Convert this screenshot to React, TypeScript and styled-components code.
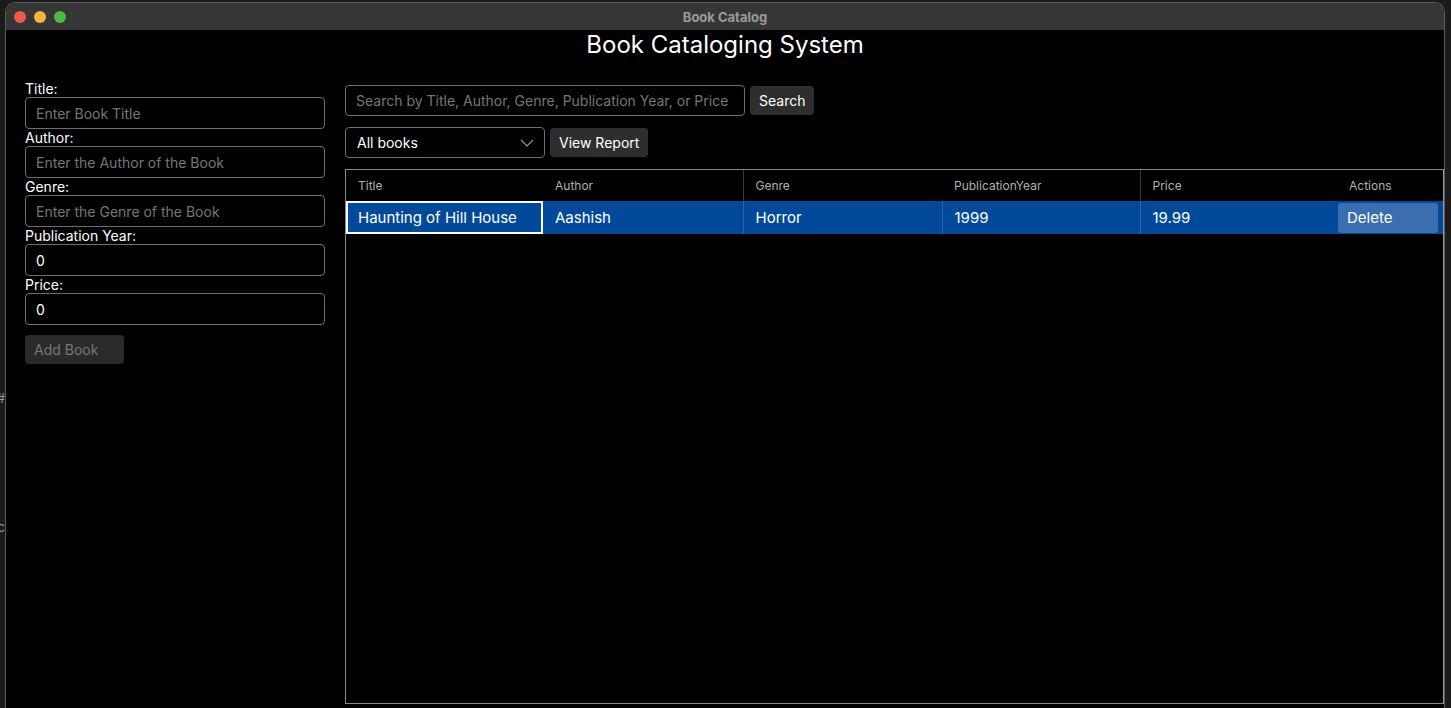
import React from "react";
import styled, { createGlobalStyle } from "styled-components";

const Global = createGlobalStyle`
  html, body { margin: 0; padding: 0; background: #1b1b1b; overflow: hidden; }
  body { font-family: Inter, "Noto Sans", "Liberation Sans", sans-serif; }
  * { box-sizing: border-box; }
`;

const Desktop = styled.div`
  display: flex;
  width: 1451px;
  height: 708px;
  overflow: hidden;
  background: #1b1b1b;
`;

const Strip = styled.div`
  width: 5px;
  flex: none;
  display: flex;
  flex-direction: column;
  overflow: hidden;
`;

const StripGlyph = styled.div<{ $top: number }>`
  margin-top: ${(p) => p.$top}px;
  height: 14px;
  display: flex;
  justify-content: flex-end;
  overflow: hidden;
  font-size: 13px;
  line-height: 14px;
  color: #9a9a9a;
  white-space: nowrap;
`;

const Window = styled.div`
  width: 1440px;
  flex: none;
  margin-top: 2px;
  border: 1px solid #5a5a5a;
  border-bottom: none;
  border-radius: 10px 10px 0 0;
  overflow: hidden;
  background: #000;
  display: flex;
  flex-direction: column;
`;

const TitleBar = styled.div`
  height: 27px;
  background: #363636;
  display: grid;
  grid-template-columns: 80px 1fr 80px;
  align-items: center;
`;

const Lights = styled.div`
  display: flex;
  gap: 8px;
  padding-left: 8px;
`;

const Light = styled.span<{ $c: string }>`
  width: 12px;
  height: 12px;
  border-radius: 50%;
  background: ${(p) => p.$c};
`;

const WindowTitle = styled.div`
  text-align: center;
  font-size: 13px;
  font-weight: 700;
  color: #9b9b9b;
`;

const Content = styled.div`
  flex: 1;
  background: #000;
  display: flex;
  flex-direction: column;
`;

const Heading = styled.h1`
  margin: 0;
  height: 30px;
  line-height: 30px;
  text-align: center;
  font-size: 24px;
  font-weight: 400;
  color: #fff;
`;

const Main = styled.div`
  display: flex;
  gap: 20px;
  padding: 20px 0 0 19px;
`;

const FormCol = styled.div`
  width: 300px;
  flex: none;
  display: flex;
  flex-direction: column;
`;

const Label = styled.label`
  height: 17px;
  line-height: 17px;
  font-size: 14px;
  color: #fff;
`;

const TextInput = styled.input`
  height: 32px;
  width: 100%;
  background: #000;
  border: 1px solid #6e6e6e;
  border-radius: 4px;
  padding: 0 10px;
  font-family: inherit;
  font-size: 14px;
  color: #fff;
  outline: none;
  &::placeholder { color: #767676; }
`;

const Button = styled.button<{ $disabled?: boolean }>`
  height: 29px;
  background: ${(p) => (p.$disabled ? "#2a2a2a" : "#2e2e2e")};
  color: ${(p) => (p.$disabled ? "#767676" : "#fff")};
  border: none;
  border-radius: 4px;
  padding: 0 9px;
  font-family: inherit;
  font-size: 14px;
  text-align: left;
`;

const AddButton = styled(Button)`
  margin-top: 10px;
  width: 99px;
`;

const RightCol = styled.div`
  flex: 1;
  display: flex;
  flex-direction: column;
  padding-top: 5px;
`;

const ToolRow = styled.div`
  display: flex;
  align-items: center;
  gap: 5px;
  margin-bottom: 11px;
`;

const SearchInput = styled(TextInput)`
  width: 400px;
  height: 31px;
`;

const Select = styled.div`
  width: 200px;
  height: 31px;
  border: 1px solid #6e6e6e;
  border-radius: 4px;
  display: flex;
  align-items: center;
  justify-content: space-between;
  padding: 0 10px 0 11px;
  font-size: 14px;
  color: #fff;
`;

const TableWrap = styled.div`
  height: 535px;
  border: 1px solid #8a8a8a;
  border-right-color: #9a9a9a;
  background: #000;
`;

const Table = styled.table`
  border-collapse: collapse;
  table-layout: fixed;
  width: 100%;
`;

const Th = styled.th<{ $line?: boolean }>`
  height: 31px;
  padding: 0 12px;
  text-align: left;
  font-weight: 400;
  font-size: 12px;
  color: #b0b0b0;
  border-left: ${(p) => (p.$line ? "1px solid #3a3a3a" : "none")};
`;

const Td = styled.td<{ $line?: boolean; $focus?: boolean }>`
  height: 33px;
  padding: 0 12px;
  background: #024a99;
  color: #fff;
  font-size: 15px;
  border-left: ${(p) => (p.$line ? "1px solid #2d63a6" : "none")};
  box-shadow: ${(p) => (p.$focus ? "inset 0 0 0 2px #fff" : "none")};
  white-space: nowrap;
`;

const ActionTd = styled.td`
  height: 33px;
  padding: 1px 5px 1px 1px;
  background: #024a99;
`;

const DeleteButton = styled.button`
  width: 100%;
  height: 30px;
  background: #3a6eae;
  border: none;
  border-radius: 3px;
  color: #fff;
  font-family: inherit;
  font-size: 15px;
  text-align: left;
  padding: 0 9px;
`;

const fields = [
  { label: "Title:", placeholder: "Enter Book Title", value: "" },
  { label: "Author:", placeholder: "Enter the Author of the Book", value: "" },
  { label: "Genre:", placeholder: "Enter the Genre of the Book", value: "" },
  { label: "Publication Year:", placeholder: "", value: "0" },
  { label: "Price:", placeholder: "", value: "0" },
];

export default function App() {
  return (
    <>
      <Global />
      <Desktop>
        <Strip>
          <StripGlyph $top={391}>#</StripGlyph>
          <StripGlyph $top={115}>ic</StripGlyph>
        </Strip>
        <Window>
          <TitleBar>
            <Lights>
              <Light $c="#ec5a52" />
              <Light $c="#f4b63c" />
              <Light $c="#4fb843" />
            </Lights>
            <WindowTitle>Book Catalog</WindowTitle>
            <div />
          </TitleBar>
          <Content>
            <Heading>Book Cataloging System</Heading>
            <Main>
              <FormCol>
                {fields.map((f) => (
                  <React.Fragment key={f.label}>
                    <Label>{f.label}</Label>
                    <TextInput placeholder={f.placeholder} defaultValue={f.value} />
                  </React.Fragment>
                ))}
                <AddButton $disabled>Add Book</AddButton>
              </FormCol>
              <RightCol>
                <ToolRow>
                  <SearchInput placeholder="Search by Title, Author, Genre, Publication Year, or Price" />
                  <Button>Search</Button>
                </ToolRow>
                <ToolRow>
                  <Select>
                    <span>All books</span>
                    <svg width="14" height="8" viewBox="0 0 14 8" fill="none">
                      <path d="M1 1l6 6 6-6" stroke="#9a9a9a" strokeWidth="1.2" />
                    </svg>
                  </Select>
                  <Button>View Report</Button>
                </ToolRow>
                <TableWrap>
                  <Table>
                    <colgroup>
                      <col style={{ width: 197 }} />
                      <col style={{ width: 200 }} />
                      <col style={{ width: 199 }} />
                      <col style={{ width: 198 }} />
                      <col style={{ width: 197 }} />
                      <col />
                    </colgroup>
                    <thead>
                      <tr>
                        <Th>Title</Th>
                        <Th>Author</Th>
                        <Th $line>Genre</Th>
                        <Th>PublicationYear</Th>
                        <Th $line>Price</Th>
                        <Th>Actions</Th>
                      </tr>
                    </thead>
                    <tbody>
                      <tr>
                        <Td $focus>Haunting of Hill House</Td>
                        <Td>Aashish</Td>
                        <Td $line>Horror</Td>
                        <Td $line>1999</Td>
                        <Td $line>19.99</Td>
                        <ActionTd>
                          <DeleteButton>Delete</DeleteButton>
                        </ActionTd>
                      </tr>
                    </tbody>
                  </Table>
                </TableWrap>
              </RightCol>
            </Main>
          </Content>
        </Window>
      </Desktop>
    </>
  );
}
